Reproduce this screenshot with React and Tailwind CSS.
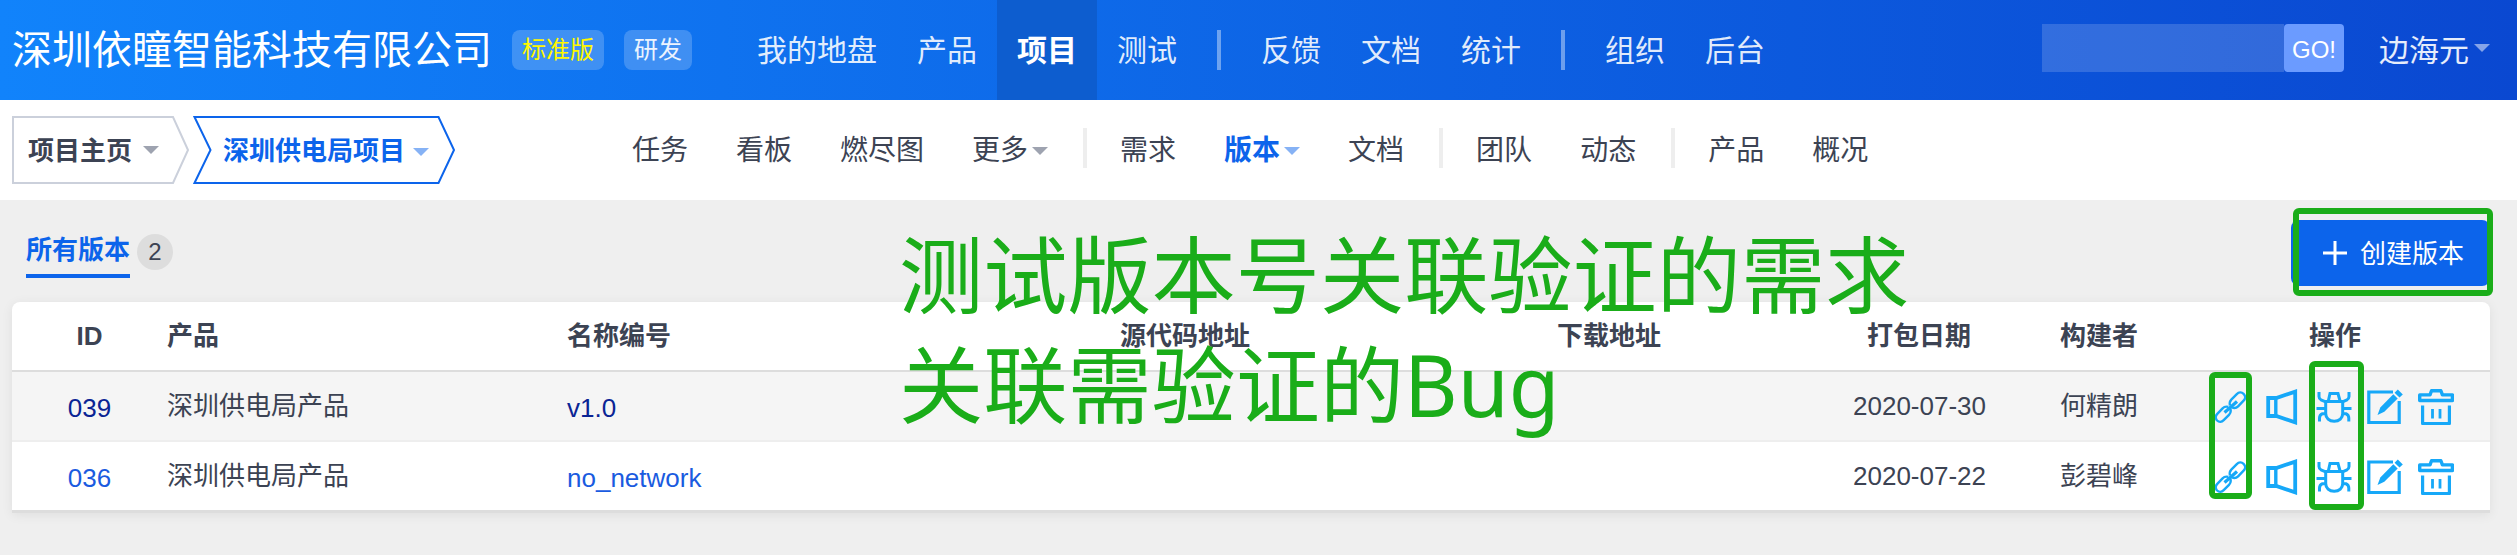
const topMenu = [
  ['我的地盘', '产品', '项目', '测试'],
  ['反馈', '文档', '统计'],
  ['组织', '后台'],
];

const subMenu = [
  [{ label: '任务' }, { label: '看板' }, { label: '燃尽图' }, { label: '更多', caret: true }],
  [{ label: '需求' }, { label: '版本', caret: true, active: true }, { label: '文档' }],
  [{ label: '团队' }, { label: '动态' }],
  [{ label: '产品' }, { label: '概况' }],
];

const rows = [
  { id: '039', product: '深圳供电局产品', name: 'v1.0', date: '2020-07-30', builder: '何精朗', visited: true },
  { id: '036', product: '深圳供电局产品', name: 'no_network', date: '2020-07-22', builder: '彭碧峰', visited: false },
];

function Caret({ className }) {
  return (
    <span
      className={`block h-0 w-0 border-x-8 border-t-8 border-x-transparent ${className}`}
    />
  );
}

function LinkIcon() {
  return (
    <svg width="32" height="34" viewBox="0 0 32 34" fill="none" stroke="#16a8f8" strokeWidth="2.4">
      <path d="M9.5 22.500 22 11.500" strokeWidth="3.200" />
      <path d="M15 15.500c-.6-2.400-.2-4.400 1.300-5.900l5.500-5.500c2-2 4.800-2.200 6.800-.300 2 2 2 4.800 0 6.800l-5.500 5.700c-1.600 1.600-4 2-6.100 1.200" />
      <path d="M15.300 18.700c.8 2.300.3 4.500-1.300 6.100l-5.300 5.400c-2 2-4.700 2.100-6.600.300-1.900-1.900-1.800-4.700.2-6.700l5.300-5.500c1.500-1.500 3.500-2 5.700-1.400" />
    </svg>
  );
}

function MegaphoneIcon() {
  return (
    <svg width="32" height="36" viewBox="0 0 32 36" fill="none" stroke="#16a8f8">
      <path d="M2.200 9h8L29.200 2.600v30.800L10.200 27h-8z" strokeWidth="3.800" />
      <path d="M9.800 9v18" strokeWidth="3.400" />
    </svg>
  );
}

function BugIcon() {
  return (
    <svg width="36" height="32" viewBox="0 0 36 32" fill="none" stroke="#16a8f8" strokeWidth="3">
      <path d="M12.200 10.500 14 2.500h8l2.200 8" />
      <path d="M9.700 10.600h17v12c0 4.500-3.500 7.700-8.500 7.700s-8.500-3.200-8.500-7.700z" strokeLinejoin="round" />
      <path d="M3 1v4.500c0 1.500.6 2.500 2 3.300l4.700 2M33 1v4.500c0 1.500-.6 2.500-2 3.300l-4.500 2" />
      <path d="M.500 17.500h9M27 17.500h8.500" />
      <path d="M9.800 22.700H6.500c-2 1-3 2.500-3 4.300v3.500M26.600 22.700h3.200c2 1 3 2.500 3 4.300v3.500" />
    </svg>
  );
}

function EditIcon() {
  return (
    <svg width="36" height="36" viewBox="0 0 36 36" fill="none">
      <path d="M26 3H1.800v30.500h30.400V12" stroke="#16a8f8" strokeWidth="3.200" />
      <path d="M26.300 5.200 30.700 9.600 17.300 22.800 10.500 26l2.800-7.500z" fill="#16a8f8" />
      <path d="M30.800.600 35.800 5.600 32.500 8.600 27.600 3.700z" fill="#16a8f8" />
    </svg>
  );
}

function TrashIcon() {
  return (
    <svg width="36" height="36" viewBox="0 0 36 36" fill="none" stroke="#16a8f8" strokeLinejoin="round">
      <path d="M1.700 11.500V5.900h10.300L13.500 1.700h9.400l1.500 4.200h10v5.600z" strokeWidth="3.400" />
      <path d="M4.600 16.500v18h26.800v-18" strokeWidth="3.200" />
      <path d="M14.500 20v9.500M22 20v9.500" strokeWidth="2.800" />
    </svg>
  );
}

function TopBar() {
  return (
    <header className="flex h-[100px] items-center bg-linear-to-r/srgb from-[#1183fb] to-[#0a48d1] pl-3">
      <h1 className="w-[480px] text-[40px] leading-none whitespace-nowrap text-white">深圳依瞳智能科技有限公司</h1>
      <span className="ml-5 flex h-10 w-[92px] items-center justify-center rounded-lg bg-white/20 text-2xl text-[#fff700]">
        标准版
      </span>
      <span className="ml-5 flex h-10 w-[68px] items-center justify-center rounded-lg bg-white/20 text-2xl text-white/90">
        研发
      </span>
      <nav className="ml-[45px] flex h-full items-center">
        {topMenu.map((group, i) => (
          <div key={i} className="flex h-full items-center">
            {i > 0 && <span className="mx-5 h-10 w-1 bg-white/40" />}
            {group.map((label) => (
              <a
                key={label}
                className={
                  label === '项目'
                    ? 'flex h-full items-center bg-[#0d5dcf] px-5 text-[30px] font-bold text-white'
                    : 'flex h-full items-center px-5 text-[30px] text-white/88'
                }
              >
                {label}
              </a>
            ))}
          </div>
        ))}
      </nav>
      <div className="mr-[173px] ml-auto flex h-12 w-[302px] -translate-y-0.5">
        <span className="flex-1 bg-white/16" />
        <button className="w-[60px] rounded bg-[#6b9bff] pt-1 text-2xl text-white">GO!</button>
      </div>
      <div className="absolute top-0 left-[2379px] flex h-[100px] items-center gap-[5px] text-[30px] text-white/90">
        边海元
        <Caret className="-translate-y-0.5 border-t-white/50" />
      </div>
    </header>
  );
}

function Breadcrumb() {
  return (
    <div className="flex">
      <div className="relative flex h-[68px] w-[177px] items-center pl-4 text-[26px] font-bold text-[#3c4353]">
        <svg className="absolute inset-0" width="177" height="68" fill="none" stroke="#cbd0db" strokeWidth="2">
          <path d="M1 1h160l15 33-15 33H1z" />
        </svg>
        <span className="relative top-px">项目主页</span>
        <Caret className="ml-[11px] border-t-[#9ea3b0]" />
      </div>
      <div className="relative ml-1 flex h-[68px] w-[262px] items-center pl-[30px] text-[26px] font-bold text-[#0c64eb]">
        <svg className="absolute inset-0" width="262" height="68" fill="none" stroke="#0c64eb" strokeWidth="2">
          <path d="M1.500 1h244l15.500 33-15.500 33H1.500l16-33z" />
        </svg>
        <span className="relative top-px">深圳供电局项目</span>
        <Caret className="ml-2 translate-y-0.5 border-t-[#86b2f5]" />
      </div>
    </div>
  );
}

function SubBar() {
  return (
    <div className="flex h-[100px] items-center bg-white pl-3">
      <Breadcrumb />
      <nav className="ml-[153px] flex items-center pt-0.5">
        {subMenu.map((group, i) => (
          <div key={i} className="flex items-center">
            {i > 0 && <span className="mr-[9px] ml-[11px] h-10 w-1 -translate-y-[3px] bg-[#eeeeee]" />}
            {group.map((item) => (
              <a
                key={item.label}
                className={
                  item.active
                    ? 'flex items-center gap-1 px-6 text-[28px] font-bold text-[#0c64eb]'
                    : 'flex items-center gap-1 px-6 text-[28px] text-[#3c4353]'
                }
              >
                {item.label}
                {item.caret && (
                  <Caret className={item.active ? 'border-t-[#86b2f5]' : 'border-t-[#9ea3b0]'} />
                )}
              </a>
            ))}
          </div>
        ))}
      </nav>
    </div>
  );
}

const columns = 'grid grid-cols-[155px_400px_414px_342px_514px_168px_119px_366px] items-center';

function BuildTable() {
  return (
    <section className="mx-3 w-[2478px] rounded-t-lg border-b-[3px] border-[#dddddd] bg-white text-[26px] text-[#3c4353] shadow-[0_2px_12px_rgba(0,0,0,0.07)]">
      <div className={`${columns} h-[70px] border-b-2 border-[#dddddd] font-bold whitespace-nowrap`}>
        <span className="text-center">ID</span>
        <span>产品</span>
        <span>名称编号</span>
        <span className="pl-[139px]">源代码地址</span>
        <span className="pl-[234px]">下载地址</span>
        <span className="pl-[30px]">打包日期</span>
        <span className="pl-[55px]">构建者</span>
        <span className="pl-[185px]">操作</span>
      </div>
      {rows.map((row, i) => (
        <div
          key={row.id}
          className={
            i === 0
              ? `${columns} h-[70px] border-b-2 border-[#eeeeee] bg-[#f5f5f5]`
              : `${columns} h-[68px]`
          }
        >
          <a className={`pt-1 text-center ${row.visited ? 'text-[#0a2494]' : 'text-[#1a5be0]'}`}>{row.id}</a>
          <span className="pt-px">{row.product}</span>
          <a className={`pt-1 ${row.visited ? 'text-[#0a2494]' : 'text-[#1a5be0]'}`}>{row.name}</a>
          <span />
          <span />
          <span className="pl-4 whitespace-nowrap">{row.date}</span>
          <span className="pt-px pl-[55px] whitespace-nowrap">{row.builder}</span>
          <span className="flex items-center pt-0.5 pl-[91px]">
            <LinkIcon />
            <span className="ml-[19px]"><MegaphoneIcon /></span>
            <span className="ml-[18px]"><BugIcon /></span>
            <span className="ml-[15px]"><EditIcon /></span>
            <span className="ml-[15px]"><TrashIcon /></span>
          </span>
        </div>
      ))}
    </section>
  );
}

function Annotations() {
  return (
    <div className="pointer-events-none">
      <p className="absolute top-[220px] left-[899px] font-['Noto_Sans','Noto_Sans_CJK_SC',sans-serif] text-[84.200px] leading-[110px] whitespace-nowrap text-[#1aad19]">
        测试版本号关联验证的需求
        <br />
        关联需验证的<span className="inline-block origin-left scale-x-96 text-[86px] leading-none">Bug</span>
      </p>
      <span className="absolute top-[208px] left-[2293px] h-[88px] w-[200px] rounded-md border-6 border-[#1aad19]" />
      <span className="absolute top-[372px] left-[2209px] h-[127px] w-[43px] rounded-md border-6 border-[#1aad19]" />
      <span className="absolute top-[361px] left-[2309px] h-[149px] w-[55px] rounded-md border-6 border-[#1aad19]" />
    </div>
  );
}

export default function App() {
  return (
    <div className="relative h-[555px] w-[2517px] overflow-hidden bg-[#efefef] font-['Liberation_Sans','Noto_Sans_CJK_SC',sans-serif]">
      <TopBar />
      <SubBar />
      <div className="flex h-[102px] items-start pl-[26px]">
        <div className="mt-[30px] flex h-12 items-start border-b-4 border-[#0c64eb] pt-px text-[26px] font-bold text-[#0c64eb]">
          所有版本
        </div>
        <span className="mt-[34px] ml-[7px] flex size-9 items-center justify-center rounded-full bg-[#dddddd] text-2xl text-[#3c4353]">
          2
        </span>
        <button className="mt-5 mr-[27px] ml-auto flex h-[66px] w-[199px] items-center rounded-lg bg-[#0c64eb] pl-8 text-[26px] text-white">
          <svg width="24" height="24" stroke="currentColor" strokeWidth="3">
            <path d="M12 0v24M0 12h24" />
          </svg>
          <span className="ml-[13px] pt-0.5">创建版本</span>
        </button>
      </div>
      <BuildTable />
      <Annotations />
    </div>
  );
}
